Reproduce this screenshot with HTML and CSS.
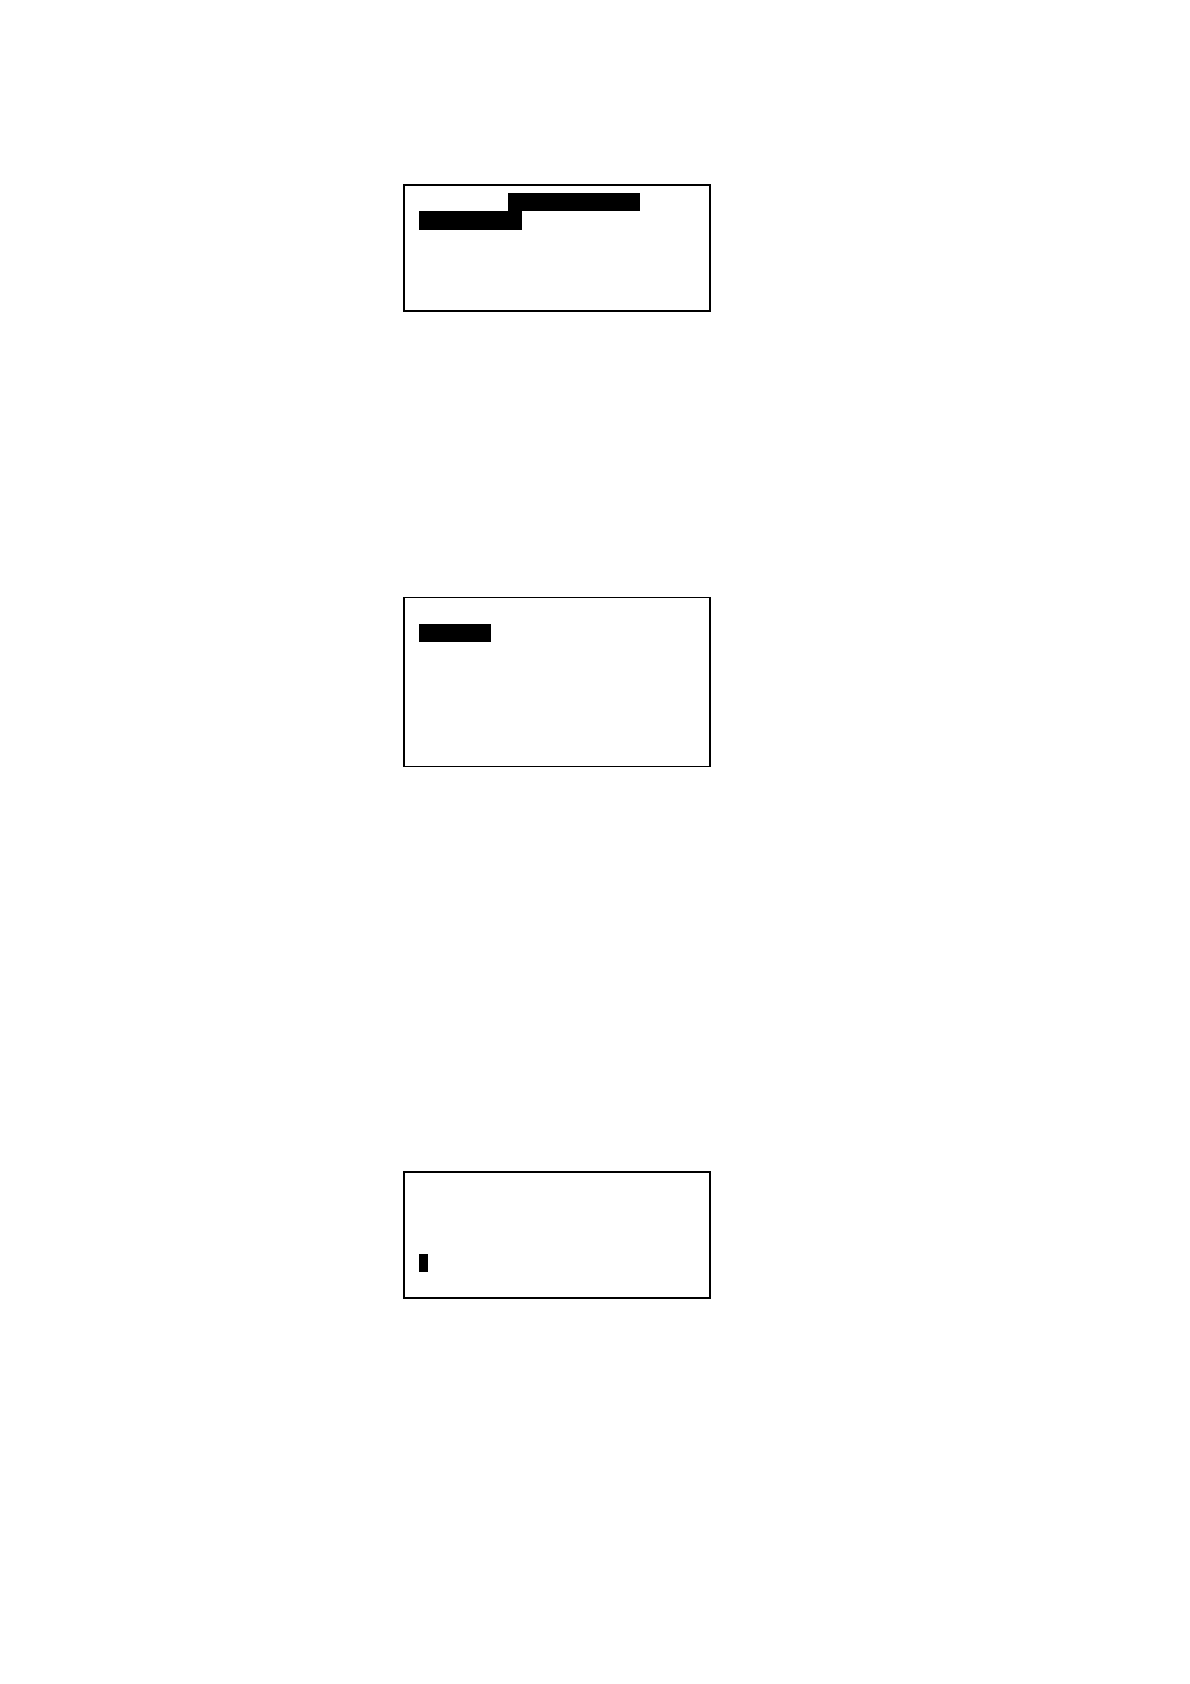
FILE: index.html
```html
<!DOCTYPE html>
<html lang="en">
<head>
<meta charset="utf-8">
<meta name="viewport" content="width=device-width, initial-scale=1">
<title>Screens</title>
<link rel="stylesheet" href="styles.css">
</head>
<body>
<main class="page">
  <section class="screen screen-short">
    <div class="bar bar-title"></div>
    <div class="bar bar-wrap"></div>
  </section>
  <section class="screen screen-tall">
    <div class="bar bar-item"></div>
  </section>
  <section class="screen screen-prompt">
    <div class="bar bar-cursor"></div>
  </section>
</main>
</body>
</html>
```
FILE: styles.css
```css
* {
  box-sizing: border-box;
}

body {
  margin: 0;
  background: #fff;
  font-family: "Liberation Sans", sans-serif;
}

.page {
  display: grid;
  grid-template-columns: 403fr 308px 479fr;
  padding: 184px 0 385px;
}

.screen {
  grid-column: 2;
  min-height: 128px;
  padding: 7px 14px;
  border: 2px solid #000;
}

.screen-tall {
  min-height: 170px;
  margin: 285px 0 404px;
  padding-top: 26px;
  border-width: 1px 2px;
}

.screen-prompt {
  padding-top: 81px;
}

.bar {
  height: 18px;
  background: #000;
}

.bar-title {
  width: 132px;
  margin-left: 89px;
}

.bar-wrap {
  width: 103px;
  height: 19px;
}

.bar-item {
  width: 72px;
}

.bar-cursor {
  width: 9px;
}
```
